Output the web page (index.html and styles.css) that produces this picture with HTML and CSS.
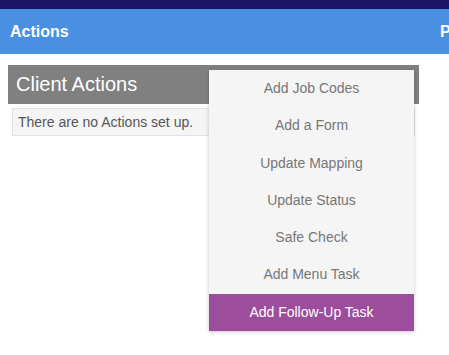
FILE: index.html
```html
<!DOCTYPE html>
<html>
<head>
<meta charset="utf-8">
<link rel="stylesheet" href="styles.css">
</head>
<body>
<div class="topbar"></div>
<nav class="nav">
  <span class="nav-title">Actions</span>
  <span class="nav-right">P</span>
</nav>
<main class="main">
  <section class="panel">
    <h2 class="panel-head">Client Actions</h2>
    <div class="panel-body">There are no Actions set up.</div>
  </section>
  <ul class="menu">
    <li class="menu-item">Add Job Codes</li>
    <li class="menu-item">Add a Form</li>
    <li class="menu-item">Update Mapping</li>
    <li class="menu-item">Update Status</li>
    <li class="menu-item">Safe Check</li>
    <li class="menu-item">Add Menu Task</li>
    <li class="menu-item active">Add Follow-Up Task</li>
  </ul>
</main>
</body>
</html>
```
FILE: styles.css
```css
html, body {
  margin: 0;
  padding: 0;
  background: #ffffff;
  font-family: "Liberation Sans", Arial, sans-serif;
}
body {
  min-height: 355px;
}
.topbar {
  height: 9px;
  background: #1d1466;
}
.nav {
  height: 45px;
  background: #4a90e2;
  display: flex;
  align-items: center;
  padding-left: 10px;
  overflow: hidden;
  color: #ffffff;
  font-weight: bold;
  font-size: 16px;
}
.nav-title {
  flex: 0 0 430px;
}
.nav-right {
  white-space: nowrap;
}
.main {
  position: relative;
  min-height: 290px;
  padding: 11px 30px 0 8px;
}
.panel {
  margin: 0;
}
.panel-head {
  margin: 0;
  height: 39px;
  line-height: 39px;
  background: #808080;
  color: #ffffff;
  font-weight: normal;
  font-size: 20px;
  padding-left: 8px;
}
.panel-body {
  margin: 4px 4px 0 4px;
  height: 26px;
  line-height: 26px;
  border: 1px solid #e2e2e2;
  background: #f5f5f5;
  color: #555555;
  font-size: 14px;
  padding-left: 5px;
}
.menu {
  position: absolute;
  left: 209px;
  top: 16px;
  width: 205px;
  margin: 0;
  padding: 0;
  list-style: none;
  background: #f5f5f5;
  box-shadow: 0 1px 4px rgba(0, 0, 0, 0.22);
}
.menu-item {
  height: 37.3px;
  line-height: 37px;
  text-align: center;
  color: #777777;
  font-size: 14px;
}
.menu-item.active {
  background: #9c4d9c;
  color: #ffffff;
}
```
